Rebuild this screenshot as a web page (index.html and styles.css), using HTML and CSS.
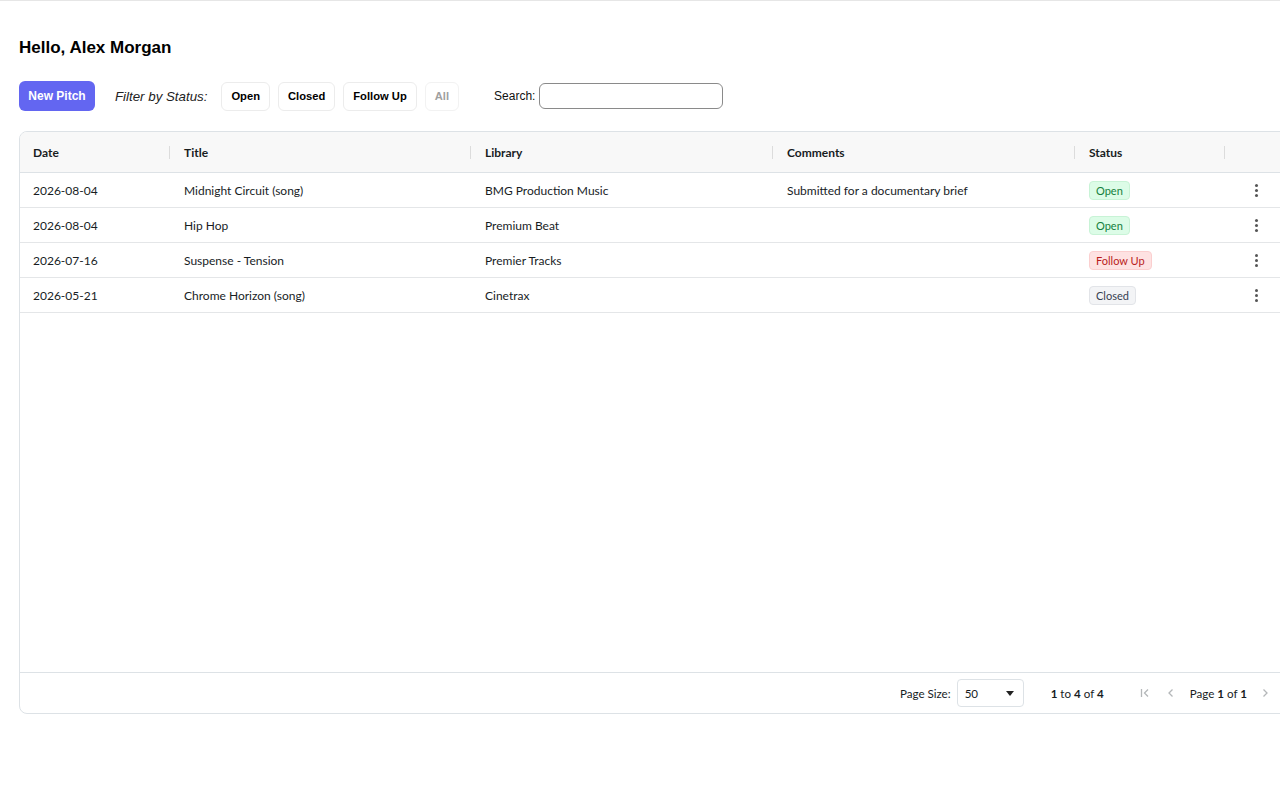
FILE: index.html
```html
<!DOCTYPE html>
<html lang="en">
<head>
<meta charset="utf-8">
<title>Pitches</title>
<link rel="stylesheet" href="styles.css">
</head>
<body>
<div class="topline"></div>
<main class="page">
  <h1 class="greeting">Hello, Alex Morgan</h1>
  <div class="toolbar">
    <button class="btn-primary">New Pitch</button>
    <span class="filter-label">Filter by Status:</span>
    <div class="filters">
      <button class="chip">Open</button>
      <button class="chip">Closed</button>
      <button class="chip">Follow Up</button>
      <button class="chip chip-disabled">All</button>
    </div>
    <label class="search">Search: <input class="search-input" type="text"></label>
  </div>

  <div class="grid">
    <div class="grid-header row">
      <div class="cell c-date">Date<span class="sep"></span></div>
      <div class="cell c-title">Title<span class="sep"></span></div>
      <div class="cell c-lib">Library<span class="sep"></span></div>
      <div class="cell c-com">Comments<span class="sep"></span></div>
      <div class="cell c-status">Status<span class="sep"></span></div>
      <div class="cell c-act"></div>
    </div>
    <div class="grid-body">
      <div class="row data-row">
        <div class="cell c-date">2026-08-04</div>
        <div class="cell c-title">Midnight Circuit (song)</div>
        <div class="cell c-lib">BMG Production Music</div>
        <div class="cell c-com">Submitted for a documentary brief</div>
        <div class="cell c-status"><span class="badge b-open">Open</span></div>
        <div class="cell c-act"><span class="kebab"><i></i><i></i><i></i></span></div>
      </div>
      <div class="row data-row">
        <div class="cell c-date">2026-08-04</div>
        <div class="cell c-title">Hip Hop</div>
        <div class="cell c-lib">Premium Beat</div>
        <div class="cell c-com"></div>
        <div class="cell c-status"><span class="badge b-open">Open</span></div>
        <div class="cell c-act"><span class="kebab"><i></i><i></i><i></i></span></div>
      </div>
      <div class="row data-row">
        <div class="cell c-date">2026-07-16</div>
        <div class="cell c-title">Suspense - Tension</div>
        <div class="cell c-lib">Premier Tracks</div>
        <div class="cell c-com"></div>
        <div class="cell c-status"><span class="badge b-follow">Follow Up</span></div>
        <div class="cell c-act"><span class="kebab"><i></i><i></i><i></i></span></div>
      </div>
      <div class="row data-row">
        <div class="cell c-date">2026-05-21</div>
        <div class="cell c-title">Chrome Horizon (song)</div>
        <div class="cell c-lib">Cinetrax</div>
        <div class="cell c-com"></div>
        <div class="cell c-status"><span class="badge b-closed">Closed</span></div>
        <div class="cell c-act"><span class="kebab"><i></i><i></i><i></i></span></div>
      </div>
    </div>
    <div class="grid-footer">
      <span class="ps-label">Page Size:</span>
      <span class="ps-select">50<span class="caret"></span></span>
      <span class="summary"><b>1</b> to <b>4</b> of <b>4</b></span>
      <span class="pager">
        <svg class="pg-icon pg-first" width="16" height="16" viewBox="0 0 16 16"><path d="M4.5 4v8M11 4.5 7.5 8 11 11.5" fill="none" stroke="#b4b7b9" stroke-width="1.3"/></svg>
        <svg class="pg-icon pg-prev" width="16" height="16" viewBox="0 0 16 16"><path d="M9.5 4.5 6 8l3.5 3.5" fill="none" stroke="#b4b7b9" stroke-width="1.3"/></svg>
        <span class="pg-text">Page <b>1</b> of <b>1</b></span>
        <svg class="pg-icon pg-next" width="16" height="16" viewBox="0 0 16 16"><path d="M6.5 4.5 10 8l-3.5 3.5" fill="none" stroke="#b4b7b9" stroke-width="1.3"/></svg>
      </span>
    </div>
  </div>
</main>
</body>
</html>
```

FILE: styles.css
```css
html, body {
  margin: 0;
  padding: 0;
  background: #fff;
  overflow: hidden;
}
body {
  font-family: "Liberation Sans", Arial, sans-serif;
  color: #000;
  width: 1280px;
}
.topline {
  height: 1px;
  background: #e6e6e6;
}
.page {
  padding: 0 19px;
}
.greeting {
  margin: 0;
  padding-top: 37px;
  font-size: 17px;
  font-weight: bold;
  line-height: 20px;
}
.toolbar {
  display: flex;
  align-items: center;
  margin-top: 23px;
  height: 30px;
}
.btn-primary {
  font-family: "Liberation Sans", Arial, sans-serif;
  background: #6366f1;
  color: #fff;
  border: none;
  border-radius: 6px;
  font-weight: bold;
  font-size: 12px;
  width: 76px;
  height: 30px;
  padding: 0;
}
.filter-label {
  font-style: italic;
  font-size: 13.3px;
  margin-left: 20px;
  color: #222;
}
.filters {
  display: flex;
  gap: 8px;
  margin-left: 14px;
}
.chip {
  font-family: "Liberation Sans", Arial, sans-serif;
  background: #fff;
  border: 1px solid #ececec;
  border-radius: 6px;
  height: 29px;
  padding: 0 9px;
  font-size: 11.2px;
  font-weight: bold;
  color: #000;
}
.chip-disabled {
  color: #a0a0a0;
  border-color: #f2f2f2;
}
.search {
  margin-left: 35px;
  font-size: 12px;
  display: flex;
  align-items: center;
  gap: 4px;
  color: #111;
}
.search-input {
  width: 182px;
  height: 24px;
  border: 1px solid #8a8a8a;
  border-radius: 6px;
  padding: 0;
  margin: 0;
}

.grid {
  margin-top: 20px;
  width: 1271px;
  height: 583px;
  border: 1px solid #dde2e6;
  border-radius: 8px;
  box-sizing: border-box;
  display: flex;
  flex-direction: column;
  font-family: Lato, "Segoe UI", sans-serif;
  color: #181d1f;
  overflow: hidden;
}
.row {
  display: flex;
}
.grid-header {
  height: 40px;
  background: #f8f8f8;
  border-bottom: 1px solid #dde2e6;
  font-weight: bold;
  font-size: 12px;
}
.cell {
  box-sizing: border-box;
  padding: 0 14px;
  display: flex;
  align-items: center;
  position: relative;
  white-space: nowrap;
}
.c-date { width: 150px; padding-left: 13px; }
.c-title { width: 301px; }
.c-lib { width: 302px; }
.c-com { width: 302px; }
.c-status { width: 150px; }
.c-act { flex: 1; justify-content: center; padding: 0; }
.sep {
  position: absolute;
  right: 0;
  top: 14px;
  width: 1px;
  height: 13px;
  background: #dcdcdc;
}
.grid-body {
  flex: 1;
  font-size: 12px;
}
.data-row {
  height: 35px;
  border-bottom: 1px solid #e4e6e8;
  box-sizing: border-box;
}
.badge {
  display: inline-block;
  font-size: 11px;
  line-height: 17px;
  padding: 0 6px;
  border-radius: 4px;
  border: 1px solid transparent;
}
.b-open { background: #dcfce7; color: #15803d; border-color: #c8f3d6; }
.b-follow { background: #fee2e2; color: #b91c1c; border-color: #fbcfcf; }
.b-closed { background: #f3f4f6; color: #374151; border-color: #e2e4e8; }
.kebab {
  display: flex;
  flex-direction: column;
  gap: 2px;
  margin-right: 2px;
}
.kebab i {
  display: block;
  width: 3px;
  height: 3px;
  border-radius: 50%;
  background: #555;
}
.grid-footer {
  height: 40px;
  border-top: 1px solid #dde2e6;
  display: flex;
  align-items: center;
  justify-content: flex-end;
  padding-right: 16px;
  font-size: 11.6px;
}
.ps-label { margin-right: 6px; }
.ps-select {
  box-sizing: border-box;
  width: 67px;
  height: 28px;
  border: 1px solid #dde2e6;
  border-radius: 4px;
  display: flex;
  align-items: center;
  justify-content: space-between;
  padding: 0 9px 0 7px;
}
.caret {
  width: 0;
  height: 0;
  border-left: 4px solid transparent;
  border-right: 4px solid transparent;
  border-top: 5px solid #222;
}
.summary { margin-left: 27px; }
.pager {
  display: flex;
  align-items: center;
  margin-left: 33px;
}
.pg-first { margin-right: 10px; }
.pg-prev { margin-right: 11px; }
.pg-text { margin-right: 10px; }
```
